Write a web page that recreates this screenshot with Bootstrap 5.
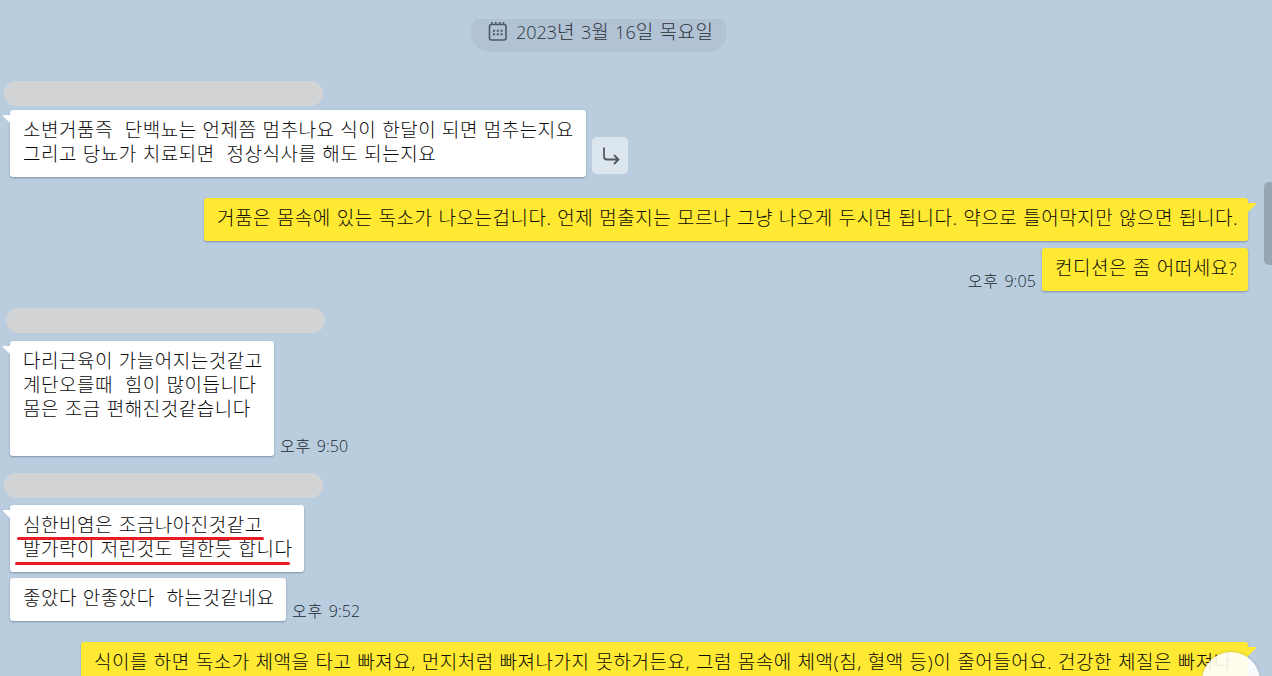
<!DOCTYPE html>
<html lang="ko">
  <head>
    <meta charset="UTF-8" />
    <meta name="viewport" content="width=device-width, initial-scale=1.0" />
    <title>Chat</title>
    <link
      href="https://cdn.jsdelivr.net/npm/bootstrap@5.3.0/dist/css/bootstrap.min.css"
      rel="stylesheet"
    />
    <style>
      body {
        background: #bacddf;
        color: #0a0a0a;
        font-family: "Open Sans", "Noto Sans CJK KR", sans-serif;
        font-size: 19px;
        font-weight: 300;
        line-height: 24px;
        letter-spacing: 0.52px;
        word-spacing: 0.4px;
      }
      .chat {
        height: 676px;
        padding: 19px 24px 0 10px;
      }
      .date-pill {
        width: 256px;
        height: 33px;
        margin-left: 461px;
        padding: 1px 0 0 17px;
        gap: 7px;
        background: #b1c2d5;
        color: #2c3338;
        border-radius: 7px 7px 20px 20px / 14px 14px 19px 19px;
      }
      .digits {
        font-size: 18px;
        letter-spacing: 0;
      }
      .sender {
        width: 319px;
        height: 25px;
        background: #d2d3d4;
        border-radius: 13px;
      }
      .sender-1 { margin: 29px 0 4px -6px; }
      .sender-2 { margin: 17px 0 8px -4px; }
      .sender-3 { margin: 17px 0 7px -6px; }
      .bubble {
        padding: 8px 0 11px 13px;
        background: #fff;
        border-radius: 3px;
        box-shadow: 0 1px 2px rgba(70, 90, 115, 0.5);
        white-space: pre;
      }
      .mine {
        background: #ffe933;
      }
      .tail::before {
        content: "";
        position: absolute;
        top: 5px;
        left: -7px;
        width: 7px;
        height: 8px;
        background: inherit;
        clip-path: polygon(0 0, 100% 0, 100% 100%, 0 15%);
      }
      .mine.tail::before {
        left: 100%;
        width: 8px;
        height: 9px;
        clip-path: polygon(0 0, 100% 0, 100% 15%, 0 100%);
      }
      .w-576 { width: 576px; }
      .w-1044 { width: 1044px; }
      .w-206 { width: 206px; }
      .w-264 { width: 264px; height: 115px; }
      .w-294 { width: 294px; }
      .w-276 { width: 276px; }
      .w-1167 { width: 1167px; }
      .gap-above-21 { margin-top: 21px; }
      .gap-above-7 { margin-top: 7px; }
      .gap-above-6 { margin-top: 6px; }
      .clock {
        margin: 0 6px;
        color: #20282e;
        font-size: 16px;
        letter-spacing: 0.9px;
        line-height: 20px;
      }
      .clock .digits {
        font-size: 16px;
        letter-spacing: 0.1px;
      }
      .reply {
        width: 36px;
        height: 37px;
        margin: 0 0 3px 6px;
        background: #dce6ef;
        border-radius: 5px;
      }
      .underline {
        position: absolute;
        height: 2.5px;
        background: #e91c23;
        border-radius: 2px;
      }
      .underline-1 { left: 7px; top: 32px; width: 247px; }
      .underline-2 { left: 5px; top: 57px; width: 275px; }
      .scroll-thumb {
        position: absolute;
        right: 0;
        top: 182px;
        width: 8px;
        height: 83px;
        background: #97a6b4;
        border-radius: 5px 0 0 5px;
      }
      .to-bottom {
        position: absolute;
        left: 1202px;
        top: 652px;
        width: 58px;
        height: 58px;
        background: rgba(255, 255, 255, 0.9);
        box-shadow: 0 0 2px rgba(70, 90, 115, 0.5);
      }
    </style>
  </head>
  <body>
    <main class="chat position-relative overflow-hidden">
      <div class="date-pill d-flex">
        <svg class="flex-shrink-0" width="21" height="22" viewBox="0 0 21 22" fill="none" stroke="#4b5865">
          <rect x="1.5" y="4.5" width="16.5" height="15.5" rx="2" stroke-width="1.6" />
          <path d="M4 2v3M7.8 2v3M11.7 2v3M15.5 2v3" stroke-width="1.6" />
          <path d="M5 10.8h10M5 14.3h10" stroke-width="1.9" stroke-dasharray="2 1.8" />
        </svg>
        <span><span class="digits">2023</span>년 <span class="digits">3</span>월 <span class="digits">16</span>일 목요일</span>
      </div>

      <div class="sender sender-1"></div>
      <div class="d-flex align-items-end">
        <div class="bubble tail position-relative w-576">소변거품즉  단백뇨는 언제쯤 멈추나요 식이 한달이 되면 멈추는지요
그리고 당뇨가 치료되면  정상식사를 해도 되는지요</div>
        <div class="reply d-flex align-items-center justify-content-center">
          <svg width="20" height="20" viewBox="0 0 20 20" fill="none" stroke="#555a5f" stroke-width="1.8">
            <path d="M4 1.5v9q0 3 3 3H18M14 9l4.5 4.5L14 18" />
          </svg>
        </div>
      </div>

      <div class="d-flex justify-content-end gap-above-21">
        <div class="bubble mine tail position-relative w-1044">거품은 몸속에 있는 독소가 나오는겁니다. 언제 멈출지는 모르나 그냥 나오게 두시면 됩니다. 약으로 틀어막지만 않으면 됩니다.</div>
      </div>
      <div class="d-flex justify-content-end align-items-end gap-above-7">
        <span class="clock">오후 <span class="digits">9:05</span></span>
        <div class="bubble mine w-206">컨디션은 좀 어떠세요?</div>
      </div>

      <div class="sender sender-2"></div>
      <div class="d-flex align-items-end">
        <div class="bubble tail position-relative w-264">다리근육이 가늘어지는것같고
계단오를때  힘이 많이듭니다
몸은 조금 편해진것같습니다</div>
        <span class="clock">오후 <span class="digits">9:50</span></span>
      </div>

      <div class="sender sender-3"></div>
      <div class="d-flex">
        <div class="bubble tail position-relative w-294">심한비염은 조금나아진것같고
발가락이 저린것도 덜한듯 합니다<i class="underline underline-1"></i><i class="underline underline-2"></i></div>
      </div>
      <div class="d-flex align-items-end gap-above-6">
        <div class="bubble w-276">좋았다 안좋았다  하는것같네요</div>
        <span class="clock">오후 <span class="digits">9:52</span></span>
      </div>

      <div class="d-flex justify-content-end gap-above-21">
        <div class="bubble mine tail position-relative w-1167">식이를 하면 독소가 체액을 타고 빠져요, 먼지처럼 빠져나가지 못하거든요, 그럼 몸속에 체액(침, 혈액 등)이 줄어들어요. 건강한 체질은 빠져나</div>
      </div>

      <div class="scroll-thumb"></div>
      <div class="to-bottom rounded-circle"></div>
    </main>
    <script src="https://cdn.jsdelivr.net/npm/bootstrap@5.3.0/dist/js/bootstrap.bundle.min.js"></script>
  </body>
</html>
